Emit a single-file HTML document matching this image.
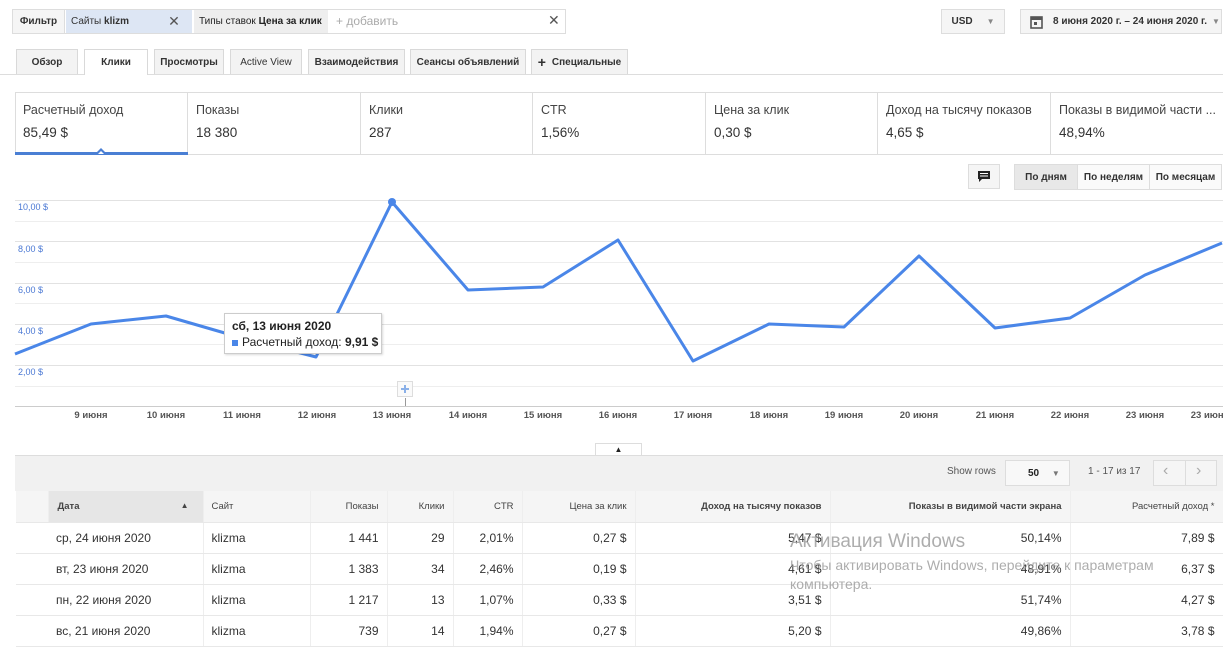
<!DOCTYPE html>
<html><head><meta charset="utf-8"><style>
*{box-sizing:border-box;margin:0;padding:0}
body{width:1223px;height:628px;overflow:hidden;background:#fff;font-family:"Liberation Sans",sans-serif;color:#222;position:relative;font-size:12px}
.a{position:absolute}
.btn{position:absolute;background:#f5f5f5;border:1px solid #ddd;font-size:10px;font-weight:bold;color:#333;display:flex;align-items:center;justify-content:center}
.tab{position:absolute;top:49px;height:25px;background:#f3f3f3;border:1px solid #d9d9d9;border-bottom:none;font-size:10px;font-weight:bold;color:#333;display:flex;align-items:center;justify-content:center}
.card{position:absolute;top:92px;height:63px;border-right:1px solid #ddd;padding:11px 0 0 8px}
.card .t{font-size:12.5px;color:#444}
.card .v{font-size:13.5px;color:#333;margin-top:8px}
.yl{position:absolute;left:18px;font-size:9px;color:#4a78d4}
.xl{position:absolute;top:410px;font-size:9.5px;font-weight:bold;color:#555;width:60px;text-align:center}
table{position:absolute;left:16px;top:491px;border-collapse:collapse;font-size:12px;color:#333;table-layout:fixed;width:1207px}
td,th{height:31px;border-right:1px solid #eee;border-bottom:1px solid #e8e8e8;padding:0 8px;text-align:right;white-space:nowrap;overflow:hidden}
th{font-size:9.5px;font-weight:bold;color:#444;height:31px;background:#f5f5f5}
</style></head><body>
<!-- filter -->
<div class="a" style="left:12px;top:9px;width:554px;height:25px;border:1px solid #ddd;background:#fff"></div>
<div class="btn" style="left:13px;top:10px;width:52px;height:23px;border:none;border-right:1px solid #ddd">Фильтр</div>
<div class="a" style="left:66px;top:10px;width:90px;height:23px;background:#dde6f4;font-size:10px;color:#333;padding:6px 0 0 5px">Сайты <b>klizm</b></div>
<div class="a" style="left:156px;top:10px;width:36px;height:23px;background:#dde6f4;font-size:14px;color:#555;text-align:center;line-height:22px">✕</div>
<div class="a" style="left:194px;top:10px;width:134px;height:23px;background:#eee;font-size:10px;padding:6px 0 0 5px">Типы ставок <b>Цена за клик</b></div>
<div class="a" style="left:336px;top:14px;font-size:12px;color:#aaa">+ добавить</div>
<div class="a" style="left:548px;top:12px;font-size:14px;color:#555">✕</div>
<div class="btn" style="left:941px;top:9px;width:64px;height:25px">USD <span style="margin-left:14px;color:#888;font-size:8px">▼</span></div>
<div class="btn" style="left:1020px;top:9px;width:202px;height:25px;justify-content:flex-start;padding-left:9px"><svg width="13" height="14" viewBox="0 0 13 14"><rect x="1" y="2" width="11" height="11" fill="none" stroke="#555" stroke-width="1.6"/><rect x="1" y="2" width="11" height="3" fill="#555"/><rect x="4" y="7" width="3" height="3" fill="#555"/></svg><span style="margin-left:10px">8 июня 2020 г. – 24 июня 2020 г.</span><span style="margin-left:5px;color:#888;font-size:8px">▼</span></div>
<!-- tabs -->
<div class="a" style="left:0;top:74px;width:1223px;height:1px;background:#ddd"></div>
<div class="tab" style="left:16px;width:62px">Обзор</div>
<div class="tab" style="left:84px;width:64px;background:#fff;height:26px">Клики</div>
<div class="tab" style="left:154px;width:70px">Просмотры</div>
<div class="tab" style="left:230px;width:72px;font-weight:normal">Active View</div>
<div class="tab" style="left:308px;width:97px">Взаимодействия</div>
<div class="tab" style="left:410px;width:116px">Сеансы объявлений</div>
<div class="tab" style="left:531px;width:97px"><span style="font-size:14px;margin-right:6px">+</span>Специальные</div>
<!-- cards -->
<div class="a" style="left:15px;top:92px;width:1208px;height:63px;border:1px solid #ddd;border-right:none"></div>
<div class="card" style="left:15px;width:173px"><div class="t">Расчетный доход</div><div class="v">85,49 $</div></div>
<div class="a" style="left:15px;top:152px;width:173px;height:3px;background:#4a7fd4"></div>
<div class="a" style="left:96px;top:148px;width:0;height:0;border-left:5px solid transparent;border-right:5px solid transparent;border-bottom:5px solid #4a7fd4"></div>
<div class="a" style="left:98px;top:151px;width:0;height:0;border-left:3px solid transparent;border-right:3px solid transparent;border-bottom:3px solid #fff"></div>
<div class="card" style="left:188px;width:173px"><div class="t">Показы</div><div class="v">18 380</div></div>
<div class="card" style="left:361px;width:172px"><div class="t">Клики</div><div class="v">287</div></div>
<div class="card" style="left:533px;width:173px"><div class="t">CTR</div><div class="v">1,56%</div></div>
<div class="card" style="left:706px;width:172px"><div class="t">Цена за клик</div><div class="v">0,30 $</div></div>
<div class="card" style="left:878px;width:173px"><div class="t">Доход на тысячу показов</div><div class="v">4,65 $</div></div>
<div class="card" style="left:1051px;width:172px;border-right:none"><div class="t">Показы в видимой части ...</div><div class="v">48,94%</div></div>
<!-- chart controls -->
<div class="btn" style="left:968px;top:164px;width:32px;height:25px;background:#f5f5f5"><svg width="14" height="13" viewBox="0 0 14 13"><path d="M1 1h12v8H5l-3 3V9H1z" fill="#222"/><path d="M3 3.5h8M3 6h8" stroke="#fff" stroke-width="1"/></svg></div>
<div class="btn" style="left:1014px;top:164px;width:64px;height:26px;background:#e8e8e8">По дням</div>
<div class="btn" style="left:1077px;top:164px;width:73px;height:26px;background:#fafafa">По неделям</div>
<div class="btn" style="left:1149px;top:164px;width:73px;height:26px;background:#fafafa">По месяцам</div>
<!-- chart -->
<svg class="a" style="left:0;top:0" width="1223" height="440">
<g stroke="#eee" stroke-width="1">
<line x1="15" x2="1223" y1="200.5" y2="200.5" stroke="#e2e2e2"/><line x1="15" x2="1223" y1="221.5" y2="221.5"/>
<line x1="15" x2="1223" y1="241.5" y2="241.5" stroke="#e2e2e2"/><line x1="15" x2="1223" y1="262.5" y2="262.5"/>
<line x1="15" x2="1223" y1="283.5" y2="283.5" stroke="#e2e2e2"/><line x1="15" x2="1223" y1="303.5" y2="303.5"/>
<line x1="15" x2="1223" y1="324.5" y2="324.5" stroke="#e2e2e2"/><line x1="15" x2="1223" y1="344.5" y2="344.5"/>
<line x1="15" x2="1223" y1="365.5" y2="365.5" stroke="#e2e2e2"/><line x1="15" x2="1223" y1="386.5" y2="386.5"/>
<line x1="15" x2="1223" y1="406.5" y2="406.5" stroke="#ccc"/>
</g>
<polyline fill="none" stroke="#4a86e8" stroke-width="3" stroke-linejoin="round" points="15,354 91,324 166,316 242,338 316,357 392,202 468,290 543,287 618,240 693,361 769,324 844,327 919,256 995,328 1070,318 1145,275 1222,243"/>
<circle cx="392" cy="202" r="4" fill="#4a86e8"/>
<line x1="405.5" y1="398" x2="405.5" y2="406" stroke="#999"/>
<rect x="397.5" y="381.5" width="15" height="15" fill="#fafafa" stroke="#ddd"/>
<path d="M405 385v8M401 389h8" stroke="#8ab0e8" stroke-width="2"/>
</svg>
<div class="yl" style="top:202px">10,00 $</div>
<div class="yl" style="top:244px">8,00 $</div>
<div class="yl" style="top:285px">6,00 $</div>
<div class="yl" style="top:326px">4,00 $</div>
<div class="yl" style="top:367px">2,00 $</div>
<div class="xl" style="left:61px">9 июня</div>
<div class="xl" style="left:136px">10 июня</div>
<div class="xl" style="left:212px">11 июня</div>
<div class="xl" style="left:287px">12 июня</div>
<div class="xl" style="left:362px">13 июня</div>
<div class="xl" style="left:438px">14 июня</div>
<div class="xl" style="left:513px">15 июня</div>
<div class="xl" style="left:588px">16 июня</div>
<div class="xl" style="left:663px">17 июня</div>
<div class="xl" style="left:739px">18 июня</div>
<div class="xl" style="left:814px">19 июня</div>
<div class="xl" style="left:889px">20 июня</div>
<div class="xl" style="left:965px">21 июня</div>
<div class="xl" style="left:1040px">22 июня</div>
<div class="xl" style="left:1115px">23 июня</div>
<div class="xl" style="left:1180px">23 июня</div>
<div class="a" style="left:224px;top:313px;width:158px;height:41px;background:#fff;border:1px solid #ccc;box-shadow:1px 1px 2px rgba(0,0,0,.15);padding:5px 0 0 7px;font-size:12px">
<div style="font-weight:bold">сб, 13 июня 2020</div>
<div style="margin-top:2px"><span style="display:inline-block;width:6px;height:6px;background:#4a86e8;margin-right:4px"></span>Расчетный доход: <b>9,91 $</b></div></div>
<!-- table area -->
<div class="a" style="left:595px;top:443px;width:47px;height:13px;border:1px solid #ddd;border-bottom:none;background:#fff;font-size:8px;text-align:center;line-height:12px">▲</div>
<div class="a" style="left:15px;top:455px;width:1208px;height:36px;background:#f1f1f1;border-top:1px solid #ddd"></div>
<div class="a" style="left:947px;top:466px;font-size:10px;color:#555">Show rows</div>
<div class="a" style="left:1005px;top:460px;width:65px;height:26px;border:1px solid #ddd;background:#f8f8f8;font-size:10px;font-weight:bold;padding:7px 0 0 22px">50 <span style="margin-left:10px;color:#777;font-size:8px">▼</span></div>
<div class="a" style="left:1088px;top:466px;font-size:10px;color:#555">1 - 17 из 17</div>
<div class="a" style="left:1153px;top:460px;width:64px;height:26px;border:1px solid #ddd;background:#f5f5f5"></div>
<div class="a" style="left:1185px;top:460px;width:1px;height:26px;background:#ddd"></div>
<div class="a" style="left:1163px;top:462px;font-size:16px;color:#aaa">‹</div>
<div class="a" style="left:1196px;top:462px;font-size:16px;color:#aaa">›</div>
<table>
<colgroup><col style="width:32px"><col style="width:155px"><col style="width:107px"><col style="width:77px"><col style="width:66px"><col style="width:69px"><col style="width:113px"><col style="width:195px"><col style="width:240px"><col style="width:153px"></colgroup>
<tr><th style="background:#f5f5f5"></th><th style="text-align:left;padding-left:9px;background:#e6e6e6">Дата<span style="float:right;font-size:8px;margin-right:6px">▲</span></th><th style="text-align:left;font-weight:normal">Сайт</th><th style="font-weight:normal">Показы</th><th style="font-weight:normal">Клики</th><th style="font-weight:normal">CTR</th><th style="font-weight:normal">Цена за клик</th><th>Доход на тысячу показов</th><th>Показы в видимой части экрана</th><th style="font-weight:normal">Расчетный доход *</th></tr>
<tr><td style="border-right:none"></td><td style="text-align:left">ср, 24 июня 2020</td><td style="text-align:left">klizma</td><td>1 441</td><td>29</td><td>2,01%</td><td>0,27 $</td><td>5,47 $</td><td>50,14%</td><td>7,89 $</td></tr>
<tr><td style="border-right:none"></td><td style="text-align:left">вт, 23 июня 2020</td><td style="text-align:left">klizma</td><td>1 383</td><td>34</td><td>2,46%</td><td>0,19 $</td><td>4,61 $</td><td>48,91%</td><td>6,37 $</td></tr>
<tr><td style="border-right:none"></td><td style="text-align:left">пн, 22 июня 2020</td><td style="text-align:left">klizma</td><td>1 217</td><td>13</td><td>1,07%</td><td>0,33 $</td><td>3,51 $</td><td>51,74%</td><td>4,27 $</td></tr>
<tr><td style="border-right:none"></td><td style="text-align:left">вс, 21 июня 2020</td><td style="text-align:left">klizma</td><td>739</td><td>14</td><td>1,94%</td><td>0,27 $</td><td>5,20 $</td><td>49,86%</td><td>3,78 $</td></tr>
</table>
<div class="a" style="left:790px;top:531px;font-size:19px;color:#999;opacity:.8">Активация Windows</div>
<div class="a" style="left:790px;top:556px;font-size:14px;color:#999;opacity:.8;line-height:19px">Чтобы активировать Windows, перейдите к параметрам<br>компьютера.</div>
</body></html>
